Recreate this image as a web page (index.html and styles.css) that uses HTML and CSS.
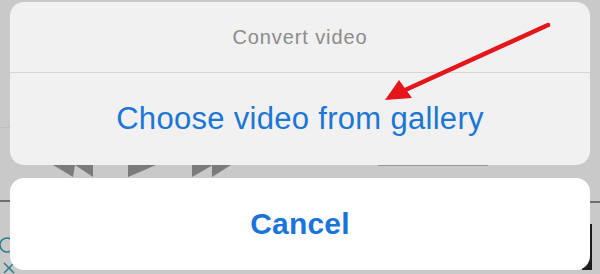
FILE: index.html
```html
<!DOCTYPE html>
<html lang="en">
<head>
<meta charset="utf-8">
<title>Convert video</title>
<link rel="stylesheet" href="styles.css">
</head>
<body>
<svg class="backdrop" width="600" height="274" viewBox="0 0 600 274" aria-hidden="true">
  <line x1="0" y1="201" x2="12" y2="201" stroke="#333" stroke-width="1.2"/>
  <line x1="588" y1="202" x2="600" y2="202" stroke="#333" stroke-width="1.2"/>
  <line x1="0" y1="127.5" x2="12" y2="127.5" stroke="#bdbdbd" stroke-width="1"/>
  <line x1="378" y1="165.5" x2="488" y2="165.5" stroke="#9a9a9a" stroke-width="1"/>
  <path d="M584 224 L592 224 L592 270 L582 270 Z" fill="#1e1e1e"/>
  <g fill="#7b7b7b">
    <polygon points="53,165 75,165 73,177"/>
    <polygon points="75,165 93,165 93,177"/>
    <polygon points="128,165 156,165 128,177"/>
    <polygon points="192,165 213,165 192,177"/>
    <polygon points="212,165 231,165 212,177"/>
  </g>
  <g fill="none" stroke="#2b7f8c" stroke-width="1.6">
    <circle cx="7" cy="245" r="7"/>
    <line x1="4" y1="263" x2="14" y2="273"/>
    <line x1="14" y1="263" x2="4" y2="273"/>
  </g>
</svg>
<main class="sheet">
  <section class="group">
    <div class="title">Convert video</div>
    <div class="divider"></div>
    <button class="action">Choose video from gallery</button>
  </section>
  <section class="group cancel-group">
    <button class="action cancel">Cancel</button>
  </section>
</main>
<svg class="annotation" width="600" height="274" viewBox="0 0 600 274" aria-hidden="true">
  <line x1="548" y1="25" x2="403" y2="91" stroke="#e4151b" stroke-width="4.5" stroke-linecap="round"/>
  <polygon points="385,100 399,80 412,98" fill="#e4151b"/>
</svg>
</body>
</html>
```

FILE: styles.css
```css
* { box-sizing: border-box; }

html, body {
  margin: 0;
  padding: 0;
}

body {
  width: 600px;
  height: 274px;
  overflow: hidden;
  position: relative;
  background: #c9c9c9;
  font-family: "Liberation Sans", Arial, sans-serif;
}

.backdrop {
  position: absolute;
  left: 0;
  top: 0;
  z-index: 0;
}

.annotation {
  position: absolute;
  left: 0;
  top: 0;
  z-index: 2;
  pointer-events: none;
}

.sheet {
  position: relative;
  z-index: 1;
  display: flex;
  flex-direction: column;
  gap: 13px;
  padding: 2px 10px 0 10px;
}

.group {
  background: #f1f1f1;
  border-radius: 14px;
  display: flex;
  flex-direction: column;
  overflow: hidden;
}

.title {
  height: 70px;
  display: flex;
  align-items: center;
  justify-content: center;
  color: #8b8b8b;
  font-size: 20px;
  letter-spacing: 0.9px;
}

.divider {
  height: 1px;
  background: #d7d7d7;
}

.action {
  height: 92px;
  border: 0;
  background: transparent;
  padding: 0;
  margin: 0;
  font-family: inherit;
  color: #1b76d6;
  font-size: 31px;
  letter-spacing: 0.3px;
  display: flex;
  align-items: center;
  justify-content: center;
  width: 100%;
}

.cancel-group {
  background: #ffffff;
}

.cancel {
  font-weight: bold;
  font-size: 30px;
  letter-spacing: 0.2px;
  color: #1a74dc;
}
```
